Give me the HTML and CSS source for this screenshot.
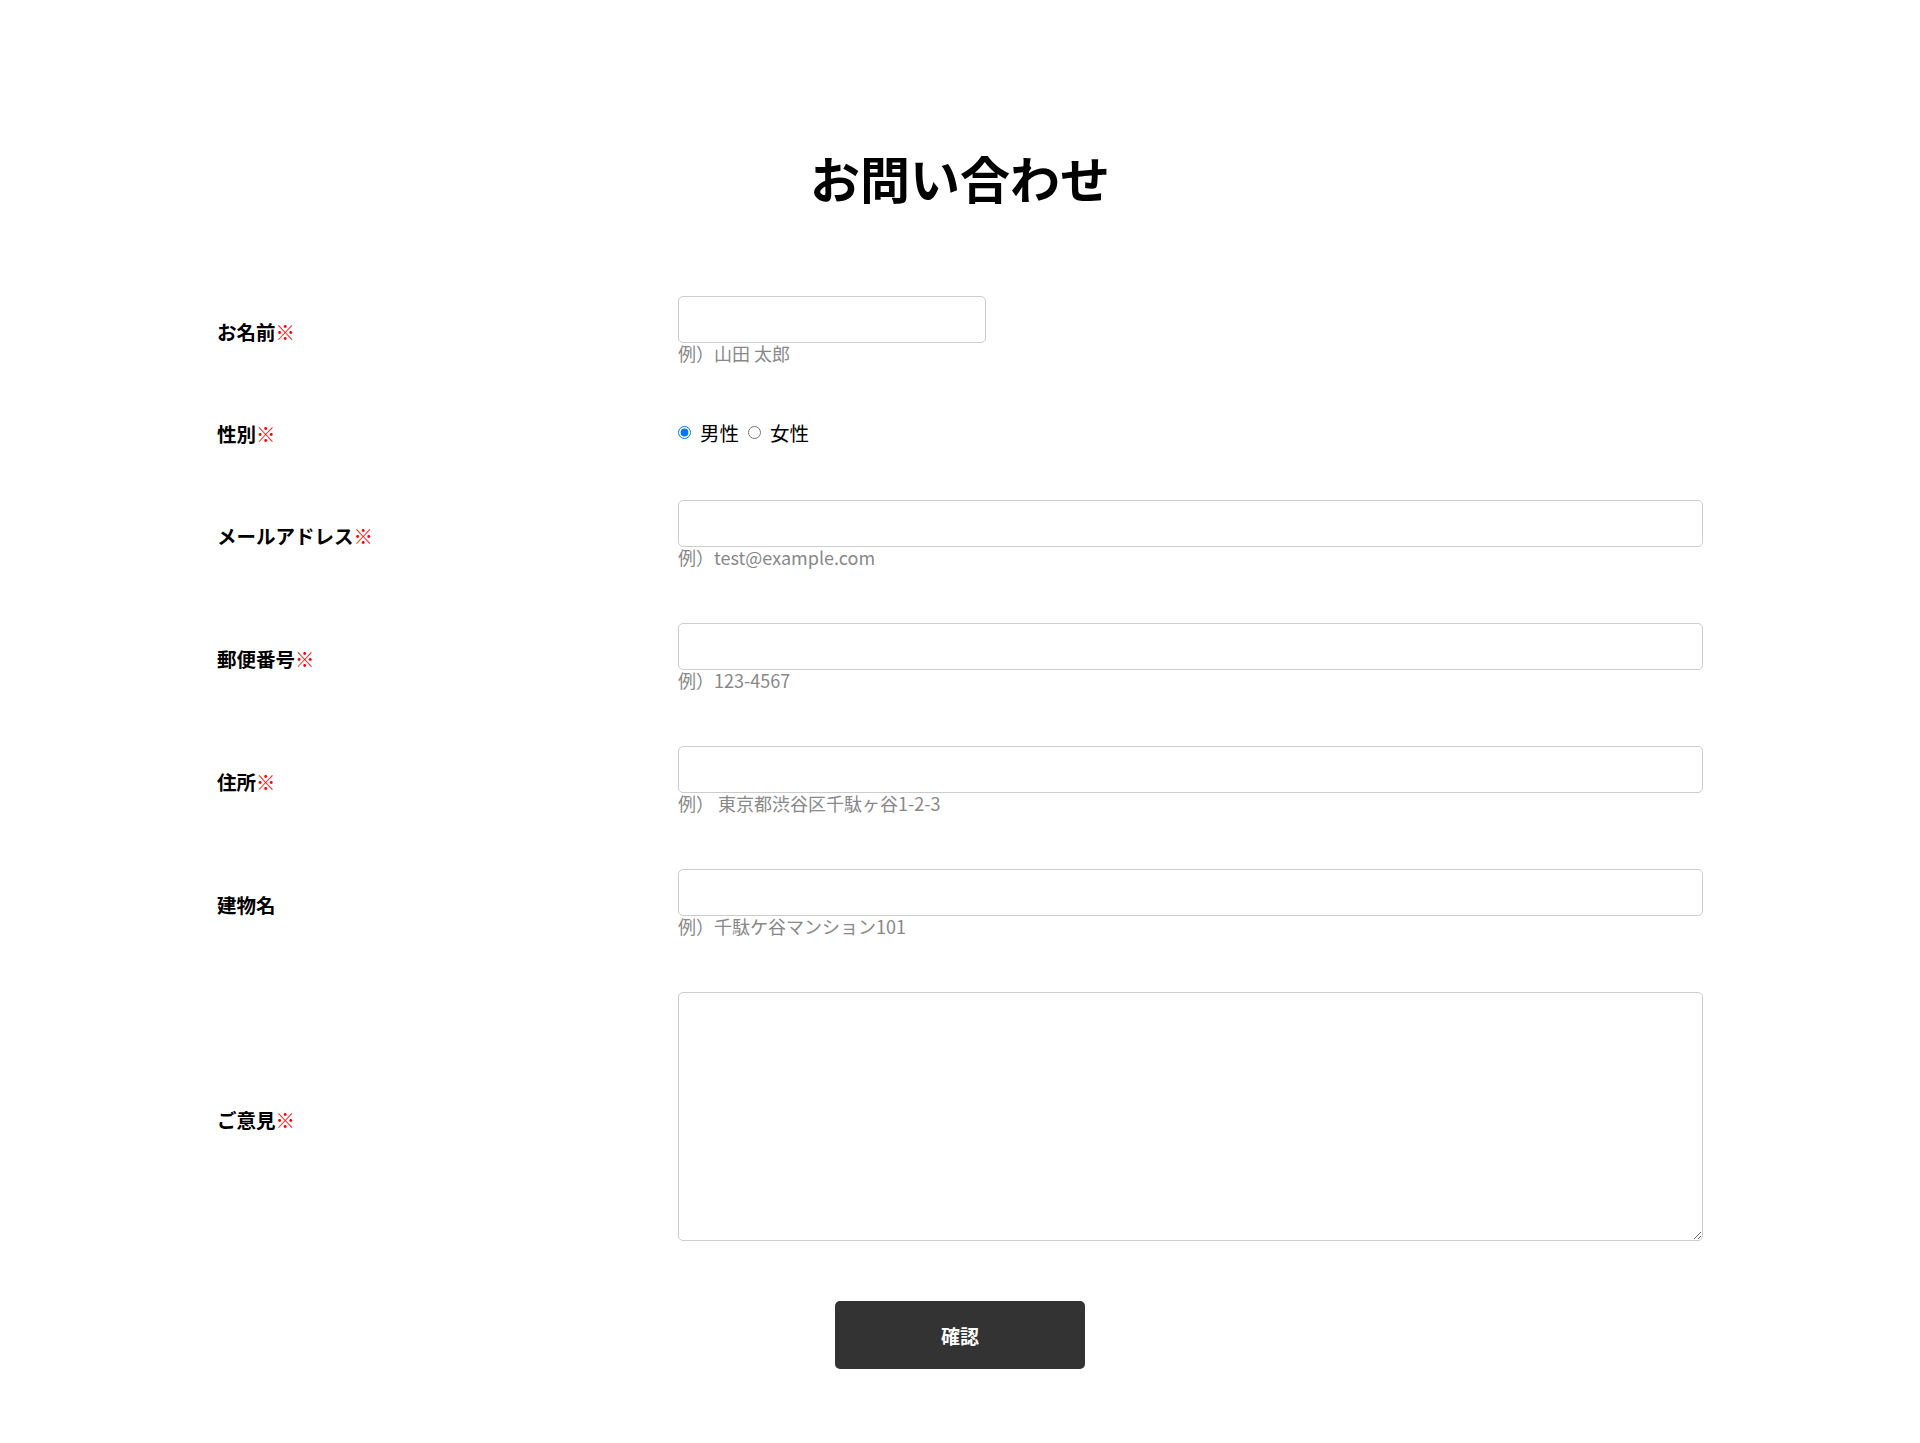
FILE: index.html
```html
<!DOCTYPE html>
<html lang="ja">
<head>
<meta charset="utf-8">
<title>お問い合わせ</title>
<link rel="stylesheet" href="styles.css">
</head>
<body>
<main class="page">
  <h1 class="title">お問い合わせ</h1>
  <form class="form">
    <div class="row">
      <div class="label">お名前<span class="req">※</span></div>
      <div class="field">
        <input class="input input-short" type="text">
        <p class="hint">例）山田 太郎</p>
      </div>
    </div>
    <div class="row row-gender">
      <div class="label">性別<span class="req">※</span></div>
      <div class="field radios">
        <label class="radio"><input type="radio" name="gender" checked><span>男性</span></label>
        <label class="radio"><input type="radio" name="gender"><span>女性</span></label>
      </div>
    </div>
    <div class="row">
      <div class="label">メールアドレス<span class="req">※</span></div>
      <div class="field">
        <input class="input" type="email">
        <p class="hint">例）test@example.com</p>
      </div>
    </div>
    <div class="row">
      <div class="label">郵便番号<span class="req">※</span></div>
      <div class="field">
        <input class="input" type="text">
        <p class="hint">例）123-4567</p>
      </div>
    </div>
    <div class="row">
      <div class="label">住所<span class="req">※</span></div>
      <div class="field">
        <input class="input" type="text">
        <p class="hint">例） 東京都渋谷区千駄ヶ谷1-2-3</p>
      </div>
    </div>
    <div class="row">
      <div class="label">建物名</div>
      <div class="field">
        <input class="input" type="text">
        <p class="hint">例）千駄ケ谷マンション101</p>
      </div>
    </div>
    <div class="row row-last">
      <div class="label">ご意見<span class="req">※</span></div>
      <div class="field">
        <textarea class="textarea"></textarea>
      </div>
    </div>
    <div class="actions">
      <button class="button" type="button">確認</button>
    </div>
  </form>
</main>
</body>
</html>
```
FILE: styles.css
```css
html, body {
  margin: 0;
  padding: 0;
  background: #fff;
}
body {
  font-family: "Noto Sans CJK JP", "Noto Sans", sans-serif;
  color: #000;
}
.page {
  padding: 141px 0 75px;
}
.title {
  margin: 0 0 83px;
  font-size: 50px;
  line-height: 72px;
  font-weight: 700;
  text-align: center;
}
.form {
  width: 1486px;
  margin: 0 auto;
}
.row {
  display: grid;
  grid-template-columns: 461px 1fr;
  align-items: center;
  margin-bottom: 52px;
}
.row-gender {
  height: 29px;
}
.row-last {
  margin-bottom: 54px;
}
.label {
  font-size: 19.5px;
  font-weight: 700;
  line-height: 24px;
}
.req {
  color: #f00;
}
.field {
  min-width: 0;
}
.input {
  display: block;
  box-sizing: border-box;
  width: 100%;
  height: 47px;
  margin: 0;
  border: 1px solid #ccc;
  border-radius: 5px;
  background: #fff;
  font: inherit;
  font-size: 16px;
}
.input-short {
  width: 30%;
}
.hint {
  margin: 0;
  padding-bottom: 4px;
  font-size: 18px;
  line-height: 20px;
  color: #888;
}
.radios {
  display: flex;
  align-items: center;
  gap: 9px;
  font-size: 19.5px;
  line-height: 27px;
  padding-bottom: 2px;
}
.radio {
  display: inline-flex;
  align-items: center;
  gap: 9px;
}
.radio input {
  margin: 0;
  width: 13px;
  height: 13px;
}
.textarea {
  display: block;
  box-sizing: border-box;
  width: 100%;
  height: 249px;
  margin: 0 0 6px;
  border: 1px solid #ccc;
  border-radius: 5px;
  background: #fff;
  font: inherit;
}
.actions {
  display: flex;
  justify-content: center;
}
.button {
  width: 250px;
  height: 68px;
  border: none;
  border-radius: 5px;
  background: #333;
  color: #fff;
  font-family: inherit;
  font-size: 19px;
  font-weight: 700;
}
```
